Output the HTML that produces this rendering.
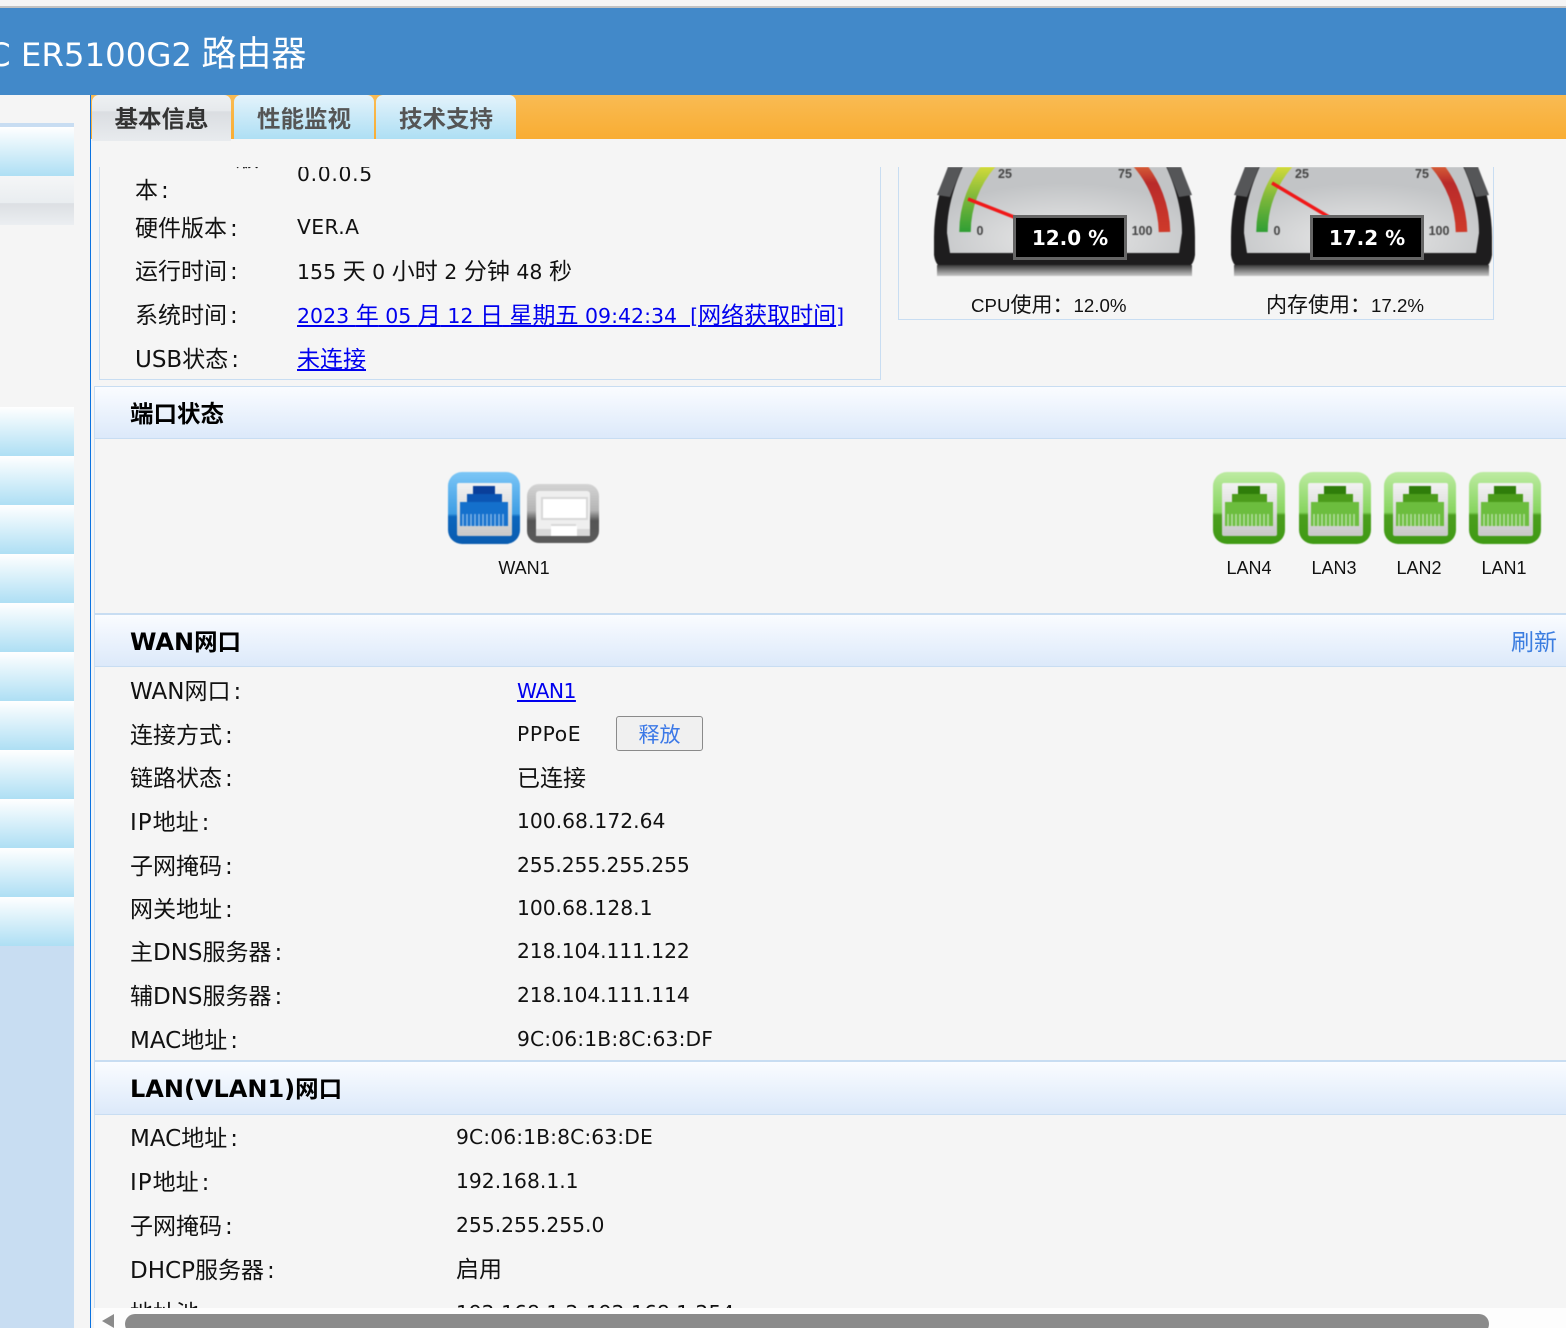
<!DOCTYPE html>
<html lang="zh"><head><meta charset="utf-8"><title>ER5100G2 路由器</title>
<style>
html,body{margin:0;padding:0;width:1566px;height:1328px;overflow:hidden;background:#f5f5f5}
body{position:relative;font-family:"DejaVu Sans","Noto Sans CJK SC",sans-serif;color:#111}
div,span,a,svg{position:absolute}
c{font:400 23px/30px "Noto Sans CJK SC",sans-serif}
.t{line-height:30px;white-space:nowrap;font-size:20.3px}
.t a,.t span{position:static}
.la{font-size:23px}
.la i{font-style:normal;margin-left:3px}
a{color:#0000ee;text-decoration:underline}
.m{left:0;width:74px;height:49px;background:linear-gradient(#fff,#aedff4)}
.tab{top:95px;width:140px;height:44px;border-radius:7px 7px 0 0;background:linear-gradient(#e4f3fb,#aedff4);text-align:center;font:700 23.5px/44px "Noto Sans CJK SC",sans-serif;color:#555}
.h{left:95px;right:0;box-sizing:border-box;border-top:2px solid #c8ddf2;border-bottom:1px solid #c8ddf2;background:linear-gradient(#fafcff,#dce9fa)}
.b{font-weight:700;font-size:24px;color:#000}
.b c{font-weight:700;font-size:23.5px}
.l{font:18px/24px "Liberation Sans",sans-serif;text-align:center;width:80px;white-space:nowrap}
.l2{font:18.7px/24px "Liberation Sans",sans-serif;white-space:nowrap}
.l2 c{font-size:21px;line-height:24px}
.ic{filter:blur(.6px)}
</style></head><body>
<svg width="0" height="0" style="left:0;top:0">
<defs>
<linearGradient id="gb" x1="0" y1="0" x2="0" y2="1"><stop offset="0" stop-color="#7cc6f6"/><stop offset=".58" stop-color="#3d9de4"/><stop offset=".62" stop-color="#0b66bd"/><stop offset="1" stop-color="#0a5cb0"/></linearGradient>
<linearGradient id="gg" x1="0" y1="0" x2="0" y2="1"><stop offset="0" stop-color="#bdeba2"/><stop offset=".56" stop-color="#86d45e"/><stop offset=".6" stop-color="#4b9e1e"/><stop offset="1" stop-color="#3f9a14"/></linearGradient>
<linearGradient id="gi" x1="0" y1="0" x2="0" y2="1"><stop offset="0" stop-color="#f2f2f2"/><stop offset="1" stop-color="#c8c8c8"/></linearGradient>
<linearGradient id="ggr" x1="0" y1="0" x2="0" y2="1"><stop offset="0" stop-color="#d4d4d4"/><stop offset=".45" stop-color="#b4b4b4"/><stop offset=".62" stop-color="#555"/><stop offset="1" stop-color="#5a5a5a"/></linearGradient>
<radialGradient id="face" cx=".5" cy=".85" r=".62"><stop offset="0" stop-color="#eaeaea"/><stop offset="1" stop-color="#c2c4c6"/></radialGradient>
<linearGradient id="arcg" x1="0" y1="1" x2="0" y2="0"><stop offset="0" stop-color="#2f9e34"/><stop offset=".5" stop-color="#7fb83a"/><stop offset="1" stop-color="#dfe03a"/></linearGradient>
<linearGradient id="arcr" x1="0" y1="1" x2="0" y2="0"><stop offset="0" stop-color="#cf3a2a"/><stop offset=".7" stop-color="#b92a2a"/><stop offset="1" stop-color="#dd6a3a"/></linearGradient>
<linearGradient id="foot" x1="0" y1="0" x2="0" y2="1"><stop offset="0" stop-color="#3a3a3a"/><stop offset="1" stop-color="#c8c8c8"/></linearGradient>
<symbol id="gauge" viewBox="0 0 261 110">
<path d="M16 -5C6 20 0 45 0 70V88Q1 95 4 98H257Q260 95 261 88V70C261 45 255 20 245 -5Z" fill="#1e1d1e"/>
<path d="M16 -5 L30 -5 L16 30 L3 28Z M245 -5 L231 -5 L245 30 L258 28Z" fill="#555658"/>
<path d="M31 -5C20 18 13 42 13 66L16 86H245L248 66C248 42 241 18 230 -5Z" fill="url(#face)"/>
<rect x="3" y="98" width="255" height="11" fill="url(#foot)"/>
<path d="M31 65C31 40 40 15 58 -5" fill="none" stroke="url(#arcg)" stroke-width="11.5"/>
<path d="M230.500 65C230 40 221 15 203 -5" fill="none" stroke="url(#arcr)" stroke-width="11.500"/>
<g font-family="Liberation Sans,sans-serif" font-weight="700" font-size="12.500" fill="#444" text-anchor="middle">
<text x="71" y="11">25</text><text x="191" y="11">75</text><text x="46" y="68">0</text><text x="208" y="68">100</text></g>
</symbol>
<symbol id="plugb" viewBox="0 0 73 73"><rect x="0" y="0" width="72" height="72" rx="14" fill="url(#gb)"/><rect x="9" y="11" width="55" height="53" rx="2" fill="url(#gi)"/>
<path d="M25 14H47V22H54V30H60V54H12V30H19V22H25Z" fill="#1470cc"/><rect x="25" y="14" width="22" height="8" fill="#0a3f9a"/><rect x="19" y="22" width="35" height="8" fill="#0c56b4"/>
<path d="M15 42v12M19 42v12M23 42v12M27 42v12M31 42v12M35 42v12M39 42v12M43 42v12M47 42v12M51 42v12M55 42v12" stroke="#7fb2e6" stroke-width="1.600"/></symbol>
<symbol id="plugg" viewBox="0 0 73 73"><rect x="0" y="0" width="72" height="72" rx="14" fill="url(#gg)"/><rect x="9" y="11" width="55" height="53" rx="2" fill="url(#gi)"/>
<path d="M25 14H47V22H54V30H60V54H12V30H19V22H25Z" fill="#6cbd3e"/><rect x="25" y="14" width="22" height="8" fill="#2f7d0a"/><rect x="19" y="22" width="35" height="8" fill="#4c9c1c"/>
<path d="M15 42v12M19 42v12M23 42v12M27 42v12M31 42v12M35 42v12M39 42v12M43 42v12M47 42v12M51 42v12M55 42v12" stroke="#b4dca0" stroke-width="1.600"/></symbol>
</defs></svg>

<div style="left:0;top:6px;width:1566px;height:2px;background:#c2c2c2"></div>
<div style="left:0;top:8px;width:1566px;height:87px;background:#4289c9"></div>
<div class="t" style="left:-12px;top:33px;color:#fff;font-size:32.400px;line-height:38px">C ER5100G2 <c style="font-size:35px;line-height:38px;margin-left:-1px">路由器</c></div>

<div style="left:0;top:123px;width:74px;height:4px;background:#c8ddf2"></div>
<div class="m" style="top:127px"></div>
<div class="m" style="top:176px;background:linear-gradient(#f5f6f7,#e9edf0 55%,#dcdfe3 56%,#ebeef1)"></div>
<div class="m" style="top:407px"></div><div class="m" style="top:456px"></div><div class="m" style="top:505px"></div><div class="m" style="top:554px"></div><div class="m" style="top:603px"></div><div class="m" style="top:652px"></div><div class="m" style="top:701px"></div><div class="m" style="top:750px"></div><div class="m" style="top:799px"></div><div class="m" style="top:848px"></div><div class="m" style="top:897px"></div>
<div style="left:0;top:946px;width:74px;height:382px;background:#c8ddf2"></div>
<div style="left:90px;top:95px;width:1px;height:1233px;background:#0a72e0"></div>

<div style="left:91px;top:95px;width:1475px;height:44px;background:linear-gradient(#f9bb53,#f9ad33)"></div>
<div class="tab" style="left:92px;width:139px;height:46px;color:#333;background:linear-gradient(#eef1f3,#e6e9ec 35%,#dadde1 36%,#e8ebee);z-index:1">基本信息</div>
<div class="tab" style="left:234px">性能监视</div>
<div class="tab" style="left:376px">技术支持</div>

<div style="left:0;top:0;width:1566px;height:1328px;clip-path:inset(167px 0 20px 0)">
 <div style="left:99px;top:140px;width:780px;height:239px;border:solid #c8ddf2;border-width:0 1px 1px 1px"></div>
 <div style="left:898px;top:140px;width:594px;height:179px;border:solid #c8ddf2;border-width:0 1px 1px 1px"></div>
 <div class="t" style="left:236px;top:141px"><c>版</c></div>
 <div class="t la" style="left:135px;top:173px"><c>本</c><i>:</i></div>
 <div class="t" style="left:297px;top:159px;letter-spacing:.7px">0.0.0.5</div>
 <div class="t la" style="left:135px;top:211px"><c>硬件版本</c><i>:</i></div>
 <div class="t" style="left:297px;top:212px;letter-spacing:.4px">VER.A</div>
 <div class="t la" style="left:135px;top:254px"><c>运行时间</c><i>:</i></div>
 <div class="t" style="left:297px;top:254px;font-size:20.500px">155 <c>天</c> 0 <c>小时</c> 2 <c>分钟</c> 48 <c>秒</c></div>
 <div class="t la" style="left:135px;top:298px"><c>系统时间</c><i>:</i></div>
 <div class="t" style="left:297px;top:298px;font-size:20.500px"><a href="#">2023 <c>年</c> 05 <c>月</c> 12 <c>日</c> <c>星期五</c> 09:42:34 &nbsp;[<c>网络获取时间</c>]</a></div>
 <div class="t la" style="left:135px;top:342px">USB<c>状态</c><i>:</i></div>
 <div class="t" style="left:297px;top:342px"><a href="#"><c>未连接</c></a></div>

 <svg class="ic" style="left:934px;top:167px" width="261" height="110"><use href="#gauge"/><path d="M34 32L85 52" stroke="#f01818" stroke-width="3.500"/></svg>
 <div style="left:1013px;top:215px;width:108px;height:39px;border:3px solid #666;background:#000;color:#fff;font:700 20px/40px 'DejaVu Sans',sans-serif;text-align:center">12.0 %</div>
 <svg class="ic" style="left:1231px;top:167px" width="261" height="110"><use href="#gauge"/><path d="M41 16L98 50" stroke="#f01818" stroke-width="3.500"/></svg>
 <div style="left:1310px;top:215px;width:108px;height:39px;border:3px solid #666;background:#000;color:#fff;font:700 20px/40px 'DejaVu Sans',sans-serif;text-align:center">17.2 %</div>
 <div class="l2" style="left:971px;top:292px">CPU<c>使用：</c>12.0%</div>
 <div class="l2" style="left:1266px;top:292px"><c>内存使用：</c>17.2%</div>

 <div style="left:94px;top:386px;width:1px;height:942px;background:#c8ddf2"></div>
 <div class="h" style="top:386px;height:53px;border-top-width:1px"></div>
 <div class="t b" style="left:130px;top:397px"><c>端口状态</c></div>
 <svg class="ic" style="left:448px;top:472px" width="73" height="73"><use href="#plugb"/></svg>
 <svg class="ic" style="left:527px;top:484px" width="73" height="60" viewBox="0 0 73 60"><rect x="0" y="0" width="72" height="59" rx="12" fill="url(#ggr)"/><rect x="9" y="7" width="54" height="45" rx="3" fill="#efefef"/><rect x="15" y="14" width="45" height="21" fill="#fff" stroke="#d8d8d8" stroke-width="2"/><path d="M9 45H24V40H49V45H63V52H9Z" fill="#d8d8d8"/><rect x="24" y="42" width="26" height="10" fill="#fff"/></svg>
 <div class="l" style="left:484px;top:556px">WAN1</div>
 <svg class="ic" style="left:1213px;top:472px" width="73" height="73"><use href="#plugg"/></svg>
 <svg class="ic" style="left:1299px;top:472px" width="73" height="73"><use href="#plugg"/></svg>
 <svg class="ic" style="left:1384px;top:472px" width="73" height="73"><use href="#plugg"/></svg>
 <svg class="ic" style="left:1469px;top:472px" width="73" height="73"><use href="#plugg"/></svg>
 <div class="l" style="left:1209px;top:556px">LAN4</div>
 <div class="l" style="left:1294px;top:556px">LAN3</div>
 <div class="l" style="left:1379px;top:556px">LAN2</div>
 <div class="l" style="left:1464px;top:556px">LAN1</div>

 <div class="h" style="top:613px;height:54px"></div>
 <div class="t b" style="left:130px;top:625px">WAN<c>网口</c></div>
 <div class="t" style="left:1511px;top:625px"><c style="color:#3b7de0">刷新</c></div>
 <div class="t la" style="left:130px;top:674px">WAN<c>网口</c><i>:</i></div>
 <div class="t" style="left:517px;top:676px;letter-spacing:-.5px"><a href="#">WAN1</a></div>
 <div class="t la" style="left:130px;top:718px"><c>连接方式</c><i>:</i></div>
 <div class="t" style="left:517px;top:719px;letter-spacing:.6px">PPPoE</div>
 <div style="left:616px;top:716px;width:85px;height:33px;border:1px solid #8a8a8a;border-radius:3px;background:#f0f0f0;color:#3b78e7;font:21px/34px 'Noto Sans CJK SC',sans-serif;text-align:center">释放</div>
 <div class="t la" style="left:130px;top:761px"><c>链路状态</c><i>:</i></div>
 <div class="t" style="left:517px;top:761px"><c>已连接</c></div>
 <div class="t la" style="left:130px;top:805px"><span style="letter-spacing:1px">IP</span><c>地址</c><i>:</i></div>
 <div class="t" style="left:517px;top:806px">100.68.172.64</div>
 <div class="t la" style="left:130px;top:849px"><c>子网掩码</c><i>:</i></div>
 <div class="t" style="left:517px;top:850px;letter-spacing:-.1px">255.255.255.255</div>
 <div class="t la" style="left:130px;top:892px"><c>网关地址</c><i>:</i></div>
 <div class="t" style="left:517px;top:893px">100.68.128.1</div>
 <div class="t la" style="left:130px;top:935px"><c>主</c>DNS<c>服务器</c><i>:</i></div>
 <div class="t" style="left:517px;top:936px;letter-spacing:-.1px">218.104.111.122</div>
 <div class="t la" style="left:130px;top:979px"><c>辅</c>DNS<c>服务器</c><i>:</i></div>
 <div class="t" style="left:517px;top:980px;letter-spacing:-.1px">218.104.111.114</div>
 <div class="t la" style="left:130px;top:1023px">MAC<c>地址</c><i>:</i></div>
 <div class="t" style="left:517px;top:1024px;letter-spacing:.12px">9C:06:1B:8C:63:DF</div>

 <div class="h" style="top:1060px;height:55px"></div>
 <div class="t b" style="left:130px;top:1072px">LAN(VLAN1)<c>网口</c></div>
 <div class="t la" style="left:130px;top:1121px">MAC<c>地址</c><i>:</i></div>
 <div class="t" style="left:456px;top:1122px;letter-spacing:.1px">9C:06:1B:8C:63:DE</div>
 <div class="t la" style="left:130px;top:1165px"><span style="letter-spacing:1px">IP</span><c>地址</c><i>:</i></div>
 <div class="t" style="left:456px;top:1166px">192.168.1.1</div>
 <div class="t la" style="left:130px;top:1209px"><c>子网掩码</c><i>:</i></div>
 <div class="t" style="left:456px;top:1210px">255.255.255.0</div>
 <div class="t la" style="left:130px;top:1253px">DHCP<c>服务器</c><i>:</i></div>
 <div class="t" style="left:456px;top:1252px"><c>启用</c></div>
 <div class="t la" style="left:130px;top:1296px"><c>地址池</c></div>
 <div class="t" style="left:456px;top:1298px">192.168.1.2-192.168.1.254</div>
</div>

<div style="left:94px;top:1308px;width:1472px;height:20px;background:#fdfdfd"></div>
<svg style="left:100px;top:1312px" width="16" height="16"><path d="M2 9L14 2V16H14Z" fill="#8b8b8b"/></svg>
<div style="left:125px;top:1314px;width:1364px;height:20px;border-radius:10px;background:#8b8b8b"></div>
</body></html>
